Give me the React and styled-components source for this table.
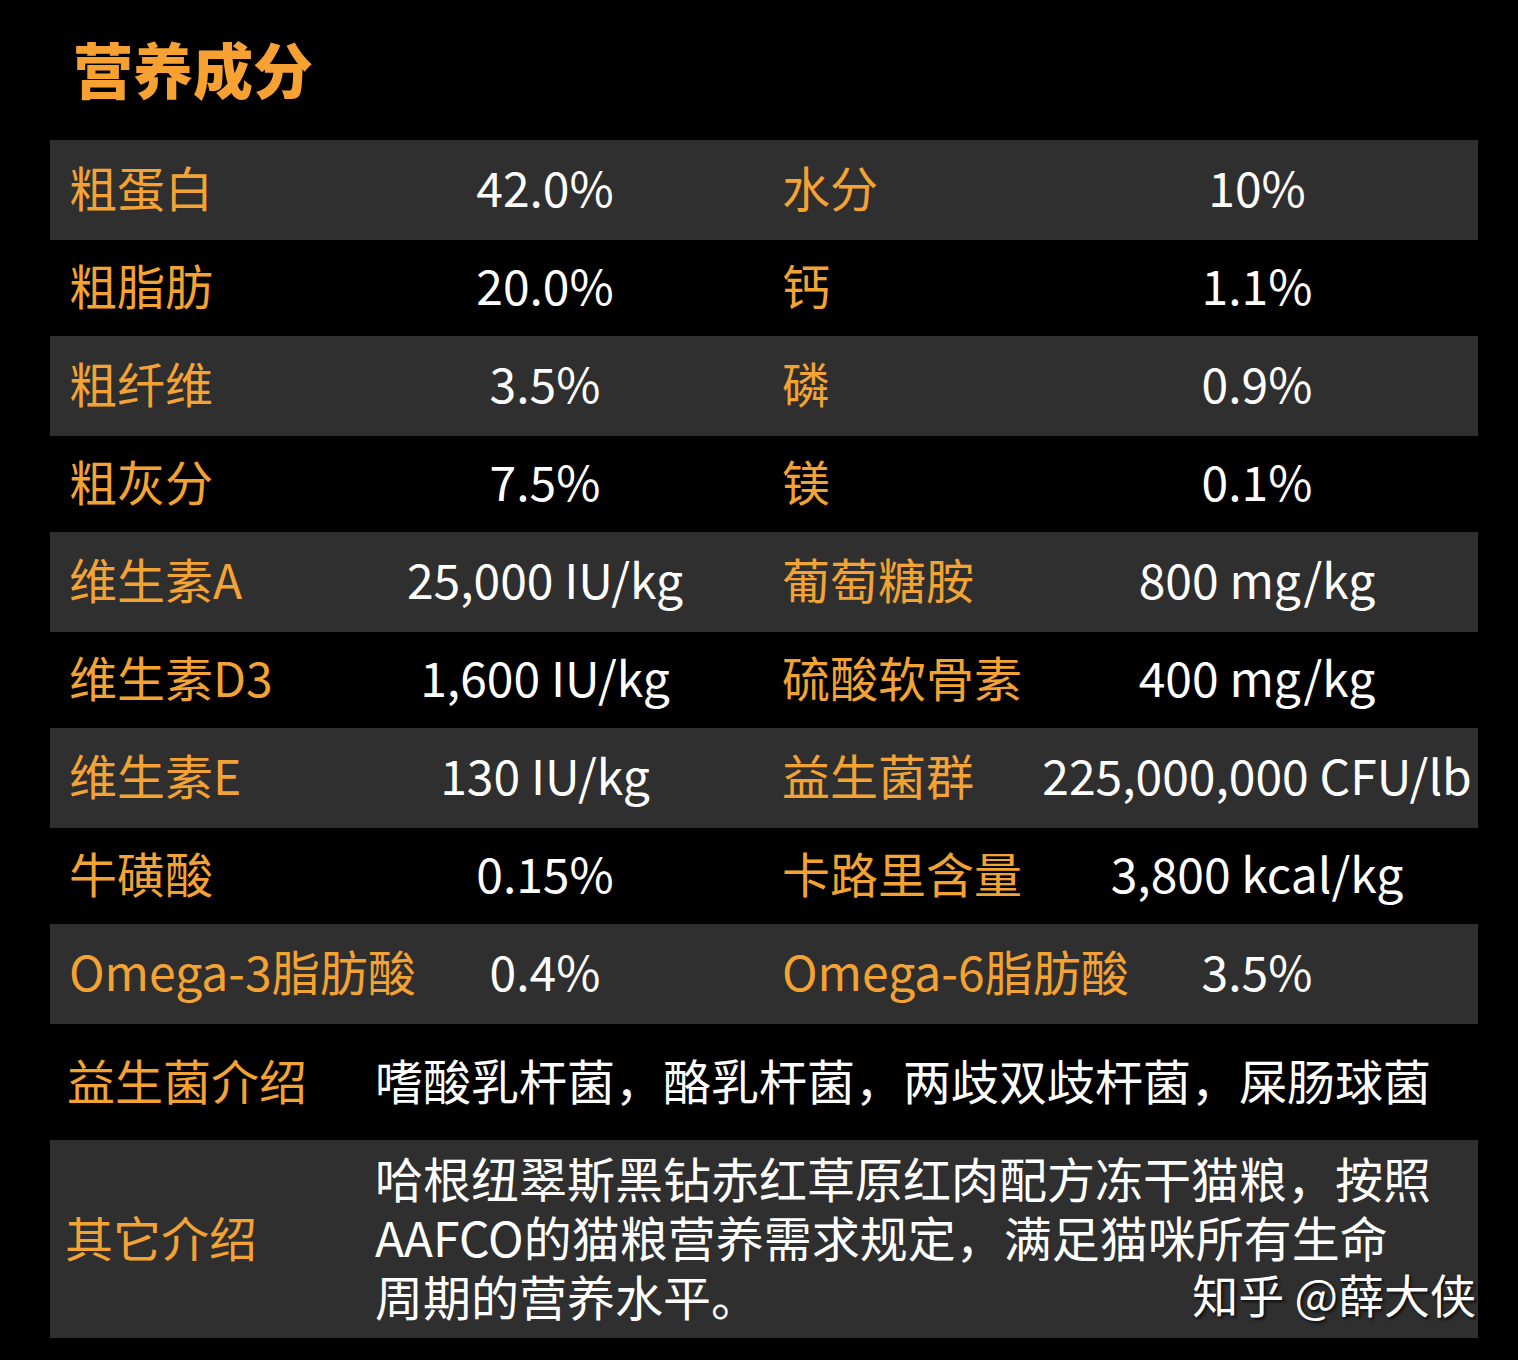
import React from 'react'
import styled, { createGlobalStyle } from 'styled-components'

const GlobalStyle = createGlobalStyle`
  html, body {
    margin: 0;
    padding: 0;
    background: #000;
  }
  body {
    font-family: "Noto Sans CJK SC", "Noto Sans", sans-serif;
  }
`

const rows = [
  ['粗蛋白', '42.0%', '水分', '10%'],
  ['粗脂肪', '20.0%', '钙', '1.1%'],
  ['粗纤维', '3.5%', '磷', '0.9%'],
  ['粗灰分', '7.5%', '镁', '0.1%'],
  ['维生素A', '25,000 IU/kg', '葡萄糖胺', '800 mg/kg'],
  ['维生素D3', '1,600 IU/kg', '硫酸软骨素', '400 mg/kg'],
  ['维生素E', '130 IU/kg', '益生菌群', '225,000,000 CFU/lb'],
  ['牛磺酸', '0.15%', '卡路里含量', '3,800 kcal/kg'],
  ['Omega-3脂肪酸', '0.4%', 'Omega-6脂肪酸', '3.5%'],
]

export default function App() {
  return (
    <Page>
      <GlobalStyle />
      <Title>营养成分</Title>
      <Table>
        {rows.map((r, i) => (
          <Row key={i} $shade={i % 2 === 0}>
            <Label $indent={19}>{r[0]}</Label>
            <Value>{r[1]}</Value>
            <Label $indent={92}>{r[2]}</Label>
            <Value>{r[3]}</Value>
          </Row>
        ))}
        <DescRow $shade={false} $h={116}>
          <Label $indent={17}>益生菌介绍</Label>
          <Desc>嗜酸乳杆菌，酪乳杆菌，两歧双歧杆菌，屎肠球菌</Desc>
        </DescRow>
        <DescRow $shade={true} $h={198}>
          <Label $indent={15}>其它介绍</Label>
          <Desc>
            哈根纽翠斯黑钻赤红草原红肉配方冻干猫粮，按照<br />
            AAFCO的猫粮营养需求规定，满足猫咪所有生命<br />
            周期的营养水平。
          </Desc>
          <Watermark>知乎 @薛大侠</Watermark>
        </DescRow>
      </Table>
    </Page>
  )
}

const Page = styled.div`
  width: 1518px;
  height: 1360px;
  background: #000;
  overflow: hidden;
`

const Title = styled.h1`
  margin: 0;
  height: 140px;
  display: flex;
  align-items: center;
  padding-left: 73px;
  padding-bottom: 6px;
  box-sizing: border-box;
  font-size: 60px;
  font-weight: 900;
  color: #f7a133;
`

const Table = styled.div`
  margin-left: 50px;
  width: 1428px;
`

const Row = styled.div`
  display: grid;
  grid-template-columns: 350px 290px 346px 1fr;
  align-items: center;
  height: ${p => (p.$shade ? 100 : 96)}px;
  padding-bottom: 8px;
  box-sizing: border-box;
  background: ${p => (p.$shade ? '#2f2f2f' : '#000')};
  white-space: nowrap;
`

const Label = styled.div`
  padding-left: ${p => p.$indent}px;
  font-size: 48px;
  line-height: 1;
  color: #f3a234;
  white-space: nowrap;
`

const Value = styled.div`
  text-align: center;
  font-size: 48px;
  line-height: 1;
  color: #fff;
`

const DescRow = styled.div`
  position: relative;
  display: grid;
  grid-template-columns: 325px 1fr;
  align-items: center;
  height: ${p => p.$h}px;
  padding-bottom: 6px;
  box-sizing: border-box;
  background: ${p => (p.$shade ? '#2f2f2f' : '#000')};
`

const Desc = styled.div`
  font-size: 48px;
  line-height: 59px;
  color: #fff;
  white-space: nowrap;
`

const Watermark = styled.div`
  position: absolute;
  right: 2px;
  bottom: 22px;
  font-size: 46px;
  line-height: 1;
  color: #fff;
  text-shadow: 2px 2px 3px rgba(0, 0, 0, 0.7);
`
